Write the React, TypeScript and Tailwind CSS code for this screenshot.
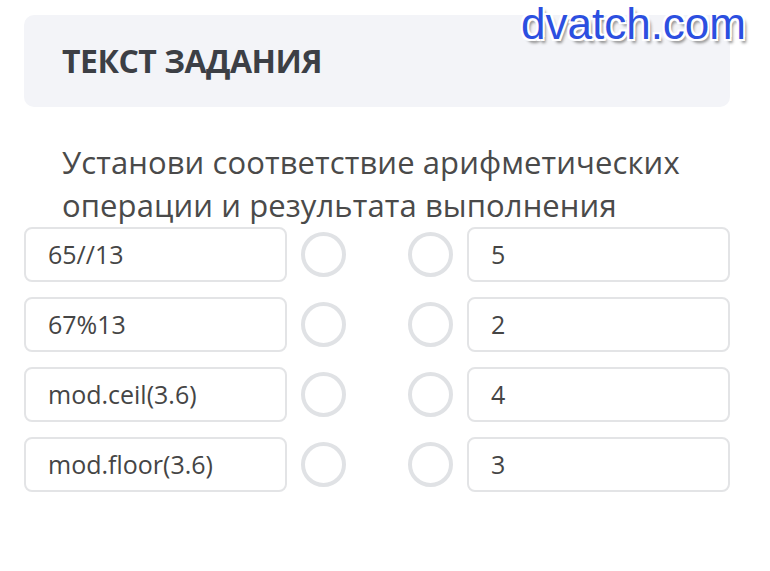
const left = ['65//13', '67%13', 'mod.ceil(3.6)', 'mod.floor(3.6)'];
const right = ['5', '2', '4', '3'];

function Circle() {
  return <div className="w-[45px] h-[45px] rounded-full border-[4px] border-[#e0e2e5] bg-white shrink-0" />;
}

export default function App() {
  return (
    <div className="relative w-[770px] h-[571px] bg-white overflow-hidden" style={{ fontFamily: '"Open Sans", sans-serif' }}>
      <div
        className="absolute left-[521px] top-[2px] text-[44px] leading-none text-[#2c4fe0]"
        style={{ fontFamily: '"Liberation Sans", Arial, sans-serif', textShadow: '-2px -2px 0 #fff, 2px -2px 0 #fff, -2px 2px 0 #fff, 2px 2px 0 #fff, 3px 4px 3px #8a8a8a' }}
      >
        dvatch.com
      </div>

      <div className="pt-[15px] px-[24px] w-[754px]">
        <div className="h-[92px] rounded-[10px] bg-[#f3f4f8] flex items-center px-[38px]">
          <h1 className="text-[32px] font-bold text-[#3c3f45] tracking-[-0.5px]">ТЕКСТ ЗАДАНИЯ</h1>
        </div>

        <p className="mt-[34px] px-[38px] text-[31px] leading-[43px] tracking-[0.1px] text-[#4a4a4a]">
          Установи соответствие арифметических операции и результата выполнения
        </p>

        <div className="flex flex-col gap-[15px]">
          {left.map((l, i) => (
            <div key={i} className="flex items-center">
              <div className="w-[263px] h-[55px] rounded-[8px] border-2 border-[#e3e4e6] flex items-center px-[22px] text-[25px] text-[#454545]">
                {l}
              </div>
              <div className="ml-[14px]"><Circle /></div>
              <div className="ml-[62px]"><Circle /></div>
              <div className="ml-[14px] w-[263px] h-[55px] rounded-[8px] border-2 border-[#e3e4e6] flex items-center px-[22px] text-[25px] text-[#454545]">
                {right[i]}
              </div>
            </div>
          ))}
        </div>
      </div>
    </div>
  );
}
